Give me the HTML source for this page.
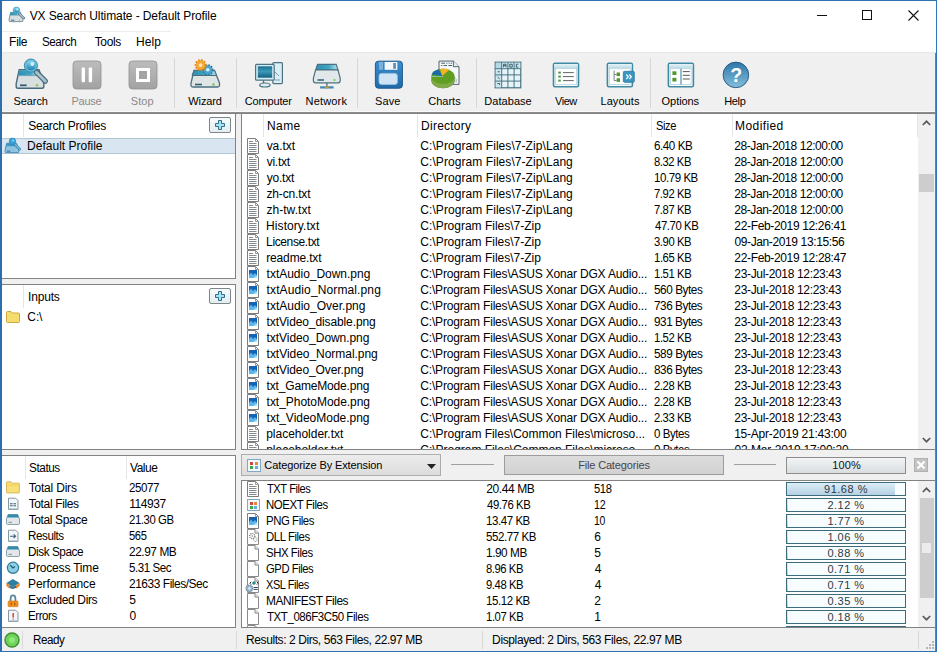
<!DOCTYPE html>
<html><head><meta charset="utf-8"><title>VX Search Ultimate</title><style>
html,body{margin:0;padding:0;width:937px;height:652px;overflow:hidden;background:#f0f0f0}
body{position:relative;font-family:"Liberation Sans",sans-serif}
.t{position:absolute;white-space:nowrap;font:12px/16px "Liberation Sans",sans-serif}
svg{overflow:visible}
</style></head><body>
<div style="position:absolute;left:0px;top:0px;width:937px;height:652px;background:#f0f0f0"></div>
<div style="position:absolute;left:1px;top:1px;width:935px;height:52px;background:#fff"></div>
<div style="position:absolute;left:1px;top:31px;width:170px;height:1px;background:#ececec"></div>
<div style="position:absolute;left:1px;top:52px;width:935px;height:1px;background:#e8e8e8"></div>
<svg style="position:absolute;left:6.35px;top:5.4px" width="20" height="20" viewBox="0 0 40 40"><path d="M9.2 14.6 H29 L33.8 28.5 V31.5 Q33.8 33.3 32 33.3 H8 Q6.2 33.3 6.2 31.5 V28.5 Z" fill="#d9dfe1" stroke="#466b7b" stroke-width="1.4"/><path d="M9.6 15.2 H27 L28.6 20.5 H7.8 Z" fill="url(#gTeal)"/><path d="M7.8 20.6 H29" stroke="#6a9aab" stroke-width="0.8"/><path d="M10 30.3 H16.6" stroke="#2f5f73" stroke-width="1.8"/><circle cx="27" cy="30.3" r="1.2" fill="#8fc04f"/><path d="M26.4 17.2 L35.4 26.2" stroke="#466b7b" stroke-width="5.2" stroke-linecap="round"/><path d="M26.4 17.2 L35.4 26.2" stroke="#aac3cd" stroke-width="2.8" stroke-linecap="round"/><circle cx="20.9" cy="10.6" r="6.6" fill="#62c2e2" stroke="#3b7f9a" stroke-width="0.9"/><circle cx="20.9" cy="10.6" r="4.9" fill="url(#gLens)"/><circle cx="22.3" cy="9" r="1.9" fill="#e6f8ff" opacity="0.85"/></svg>
<div class="t" style="left:29.67450980392157px;top:8px;color:#000;letter-spacing:-0.109px;">VX Search Ultimate - Default Profile</div>
<div style="position:absolute;left:817px;top:15px;width:10px;height:1px;background:#111"></div>
<div style="position:absolute;left:862px;top:10px;width:10px;height:10px;border:1px solid #111;box-sizing:border-box"></div>
<svg style="position:absolute;left:908px;top:10px" width="11" height="11" viewBox="0 0 11 11"><path d="M0.5 0.5 L10.5 10.5 M10.5 0.5 L0.5 10.5" stroke="#111" stroke-width="1.1"/></svg>
<div class="t" style="left:9.113725490196078px;top:34px;color:#000;letter-spacing:-0.305px;">File</div>
<div class="t" style="left:42.2px;top:34px;color:#000;letter-spacing:-0.450px;transform:scaleX(0.9671);transform-origin:0.8000000000000007px 0;">Search</div>
<div class="t" style="left:94.67450980392157px;top:34px;color:#000;letter-spacing:-0.337px;">Tools</div>
<div class="t" style="left:136.1137254901961px;top:34px;color:#000;letter-spacing:0.037px;">Help</div>
<div class="t" style="left:13.562745098039215px;top:93px;color:#000;font-size:11px;letter-spacing:-0.087px;">Search</div>
<div class="t" style="left:71.46862745098039px;top:93px;color:#8a8a8a;font-size:11px;letter-spacing:-0.226px;">Pause</div>
<div class="t" style="left:130.7627450980392px;top:93px;color:#8a8a8a;font-size:11px;letter-spacing:0.097px;">Stop</div>
<div class="t" style="left:188.27450980392157px;top:93px;color:#000;font-size:11px;letter-spacing:-0.107px;">Wizard</div>
<div class="t" style="left:244.7686274509804px;top:93px;color:#000;font-size:11px;letter-spacing:-0.159px;">Computer</div>
<div class="t" style="left:305.5686274509804px;top:93px;color:#000;font-size:11px;letter-spacing:0.165px;">Network</div>
<div class="t" style="left:375.0627450980392px;top:93px;color:#000;font-size:11px;letter-spacing:0.101px;">Save</div>
<div class="t" style="left:428.1686274509804px;top:93px;color:#000;font-size:11px;letter-spacing:0.025px;">Charts</div>
<div class="t" style="left:484.3686274509804px;top:93px;color:#000;font-size:11px;letter-spacing:0.042px;">Database</div>
<div class="t" style="left:554.5470588235294px;top:93px;color:#000;font-size:11px;letter-spacing:-0.450px;transform:scaleX(0.9952);transform-origin:0.352941176470587px 0;">View</div>
<div class="t" style="left:600.4686274509803px;top:93px;color:#000;font-size:11px;letter-spacing:0.071px;">Layouts</div>
<div class="t" style="left:661.6196078431373px;top:93px;color:#000;font-size:11px;letter-spacing:-0.067px;">Options</div>
<div class="t" style="left:724.1686274509804px;top:93px;color:#000;font-size:11px;letter-spacing:-0.305px;">Help</div>
<div style="position:absolute;left:174px;top:58px;width:1px;height:50px;background:#d6d6d6"></div>
<div style="position:absolute;left:236px;top:58px;width:1px;height:50px;background:#d6d6d6"></div>
<div style="position:absolute;left:357px;top:58px;width:1px;height:50px;background:#d6d6d6"></div>
<div style="position:absolute;left:476px;top:58px;width:1px;height:50px;background:#d6d6d6"></div>
<div style="position:absolute;left:650px;top:58px;width:1px;height:50px;background:#d6d6d6"></div>
<div style="position:absolute;left:2px;top:112px;width:234px;height:167px;background:#fff;border:1px solid #828282;box-sizing:border-box;border-left:0"></div>
<div style="position:absolute;left:2px;top:284px;width:234px;height:166px;background:#fff;border:1px solid #828282;box-sizing:border-box;border-left:0"></div>
<div style="position:absolute;left:2px;top:455px;width:234px;height:173px;background:#fff;border:1px solid #828282;box-sizing:border-box;border-left:0"></div>
<div style="position:absolute;left:241px;top:112px;width:695px;height:338px;background:#fff;border:1px solid #828282;box-sizing:border-box"></div>
<div style="position:absolute;left:241px;top:480px;width:695px;height:148px;background:#fff;border:1px solid #828282;box-sizing:border-box"></div>
<div style="position:absolute;left:23px;top:113px;width:1px;height:24px;background:#e5e5e5"></div>
<div style="position:absolute;left:23px;top:285px;width:1px;height:23px;background:#e5e5e5"></div>
<div style="position:absolute;left:25px;top:456px;width:1px;height:23px;background:#e5e5e5"></div>
<div style="position:absolute;left:126px;top:456px;width:1px;height:23px;background:#e5e5e5"></div>
<div style="position:absolute;left:263px;top:113px;width:1px;height:24px;background:#e5e5e5"></div>
<div style="position:absolute;left:417px;top:113px;width:1px;height:24px;background:#e5e5e5"></div>
<div style="position:absolute;left:651px;top:113px;width:1px;height:24px;background:#e5e5e5"></div>
<div style="position:absolute;left:732px;top:113px;width:1px;height:24px;background:#e5e5e5"></div>
<div style="position:absolute;left:917px;top:113px;width:1px;height:24px;background:#e5e5e5"></div>
<div class="t" style="left:28.2px;top:118px;color:#000;letter-spacing:-0.245px;">Search Profiles</div>
<div style="position:absolute;left:209px;top:117px;width:22px;height:16px;border:1px solid #7c878c;border-radius:2px;box-sizing:border-box;background:linear-gradient(#f6fafb,#e6eef1)"></div>
<svg style="position:absolute;left:215px;top:120px" width="10" height="10" viewBox="0 0 10 10"><path d="M3.5 0.5 h3 v3 h3 v3 h-3 v3 h-3 v-3 h-3 v-3 h3 z" fill="#a6e2f5" stroke="#2f7185" stroke-width="1"/></svg>
<div style="position:absolute;left:2px;top:138px;width:233px;height:16px;background:#d9e6f1;border-top:1px solid #b3c6d4;border-bottom:1px solid #b3c6d4;box-sizing:border-box"></div>
<svg style="position:absolute;left:2.25px;top:136.4px" width="20" height="20" viewBox="0 0 40 40"><path d="M9.2 14.6 H29 L33.8 28.5 V31.5 Q33.8 33.3 32 33.3 H8 Q6.2 33.3 6.2 31.5 V28.5 Z" fill="#8ec4e0" stroke="#2f7fae" stroke-width="1.6"/><path d="M9.6 15.2 H27 L28.6 20.5 H7.8 Z" fill="#3a98c8"/><path d="M10 30.3 H16.6" stroke="#2f6f98" stroke-width="2"/><path d="M26.4 17.2 L35.4 26.2" stroke="#2f7fae" stroke-width="5.2" stroke-linecap="round"/><path d="M26.4 17.2 L35.4 26.2" stroke="#7ab8dc" stroke-width="2.8" stroke-linecap="round"/><circle cx="20.9" cy="10.6" r="6.6" fill="#3aa2d6" stroke="#2a78a8" stroke-width="1"/><circle cx="22.3" cy="9" r="2.2" fill="#8fdcff" opacity="0.9"/></svg>
<div class="t" style="left:27.113725490196078px;top:138px;color:#000;letter-spacing:-0.001px;">Default Profile</div>
<div class="t" style="left:28.066666666666666px;top:289px;color:#000;letter-spacing:-0.189px;">Inputs</div>
<div style="position:absolute;left:209px;top:288px;width:22px;height:16px;border:1px solid #7c878c;border-radius:2px;box-sizing:border-box;background:linear-gradient(#f6fafb,#e6eef1)"></div>
<svg style="position:absolute;left:215px;top:291px" width="10" height="10" viewBox="0 0 10 10"><path d="M3.5 0.5 h3 v3 h3 v3 h-3 v3 h-3 v-3 h-3 v-3 h3 z" fill="#a6e2f5" stroke="#2f7185" stroke-width="1"/></svg>
<svg style="position:absolute;left:6px;top:311px" width="14" height="12" viewBox="0 0 14 12"><path d="M0.5 1.5 Q0.5 0.5 1.5 0.5 H5 L6.5 2 H12.5 Q13.5 2 13.5 3 V10.5 Q13.5 11.5 12.5 11.5 H1.5 Q0.5 11.5 0.5 10.5 Z" fill="#f6dc6e" stroke="#c9a83c" stroke-width="1"/></svg>
<div class="t" style="left:27.341176470588234px;top:309px;color:#000;letter-spacing:-0.112px;">C:\</div>
<div class="t" style="left:29.2px;top:460px;color:#000;letter-spacing:-0.450px;transform:scaleX(0.9823);transform-origin:0.8000000000000007px 0;">Status</div>
<div class="t" style="left:129.67450980392158px;top:460px;color:#000;letter-spacing:-0.450px;transform:scaleX(0.9975);transform-origin:0.3254901960784302px 0;">Value</div>
<svg style="position:absolute;left:6px;top:481px" width="14" height="15" viewBox="0 0 14 15"><path d="M0.5 1.5 Q0.5 0.8 1.2 0.8 H5 L6.3 2.2 H12.6 Q13.3 2.2 13.3 3 V11.2 Q13.3 11.9 12.6 11.9 H1.2 Q0.5 11.9 0.5 11.2 Z" fill="#f9e07a" stroke="#d2b04a" stroke-width="0.9"/><path d="M0.8 4.2 H13" stroke="#f3ca4a" stroke-width="0.8"/></svg>
<div class="t" style="left:28.67450980392157px;top:480px;color:#000;letter-spacing:-0.199px;">Total Dirs</div>
<div class="t" style="left:129.34901960784313px;top:480px;color:#000;letter-spacing:-0.450px;transform:scaleX(0.9641);transform-origin:0.650980392156864px 0;">25077</div>
<svg style="position:absolute;left:6px;top:497px" width="14" height="15" viewBox="0 0 14 15"><path d="M2.5 1.2 H9.6 L12 3.6 V12.5 H2.5 Z" fill="#f3f6f8" stroke="#8596a2"/><path d="M2.8 11 H11.7 V12.2 H2.8 Z" fill="#bcd3e0"/><path d="M4 6.7h2.6M7.4 6.7h2.6M4 8.7h2.6M7.4 8.7h2.6" stroke="#3f5f74" stroke-width="1.1"/></svg>
<div class="t" style="left:28.67450980392157px;top:496px;color:#000;letter-spacing:-0.365px;">Total Files</div>
<div class="t" style="left:129.14901960784314px;top:496px;color:#000;letter-spacing:-0.431px;">114937</div>
<svg style="position:absolute;left:6px;top:513px" width="14" height="15" viewBox="0 0 14 15"><path d="M2 1.5 H11.8 L13.5 6 V10.3 Q13.5 11.5 12.3 11.5 H1.7 Q0.5 11.5 0.5 10.3 V6 Z" fill="#e1e7ea" stroke="#7f959e" stroke-width="0.9"/><path d="M2.2 1.6 H11.6 L12.8 4.6 H1.2 Z" fill="#2e8cad"/><path d="M2.5 9.3h3.5" stroke="#6a8a98" stroke-width="0.9"/></svg>
<div class="t" style="left:28.67450980392157px;top:512px;color:#000;letter-spacing:-0.378px;">Total Space</div>
<div class="t" style="left:129.34901960784313px;top:512px;color:#000;letter-spacing:-0.450px;transform:scaleX(0.9473);transform-origin:0.650980392156864px 0;">21.30 GB</div>
<svg style="position:absolute;left:6px;top:529px" width="14" height="15" viewBox="0 0 14 15"><path d="M2.5 1.2 H9.6 L12 3.6 V12.5 H2.5 Z" fill="#f3f6f8" stroke="#8596a2"/><path d="M2.8 11 H11.7 V12.2 H2.8 Z" fill="#bcd3e0"/><path d="M4 7.2 H9.6 M7.6 5.3 L9.6 7.2 L7.6 9.1" stroke="#3f5f74" stroke-width="1.1" fill="none"/></svg>
<div class="t" style="left:28.113725490196078px;top:528px;color:#000;letter-spacing:-0.450px;transform:scaleX(0.9687);transform-origin:0.886274509803922px 0;">Results</div>
<div class="t" style="left:129.26666666666665px;top:528px;color:#000;letter-spacing:-0.450px;transform:scaleX(0.9331);transform-origin:0.7333333333333343px 0;">565</div>
<svg style="position:absolute;left:6px;top:545px" width="14" height="15" viewBox="0 0 14 15"><path d="M2 1.5 H11.8 L13.5 6 V10.3 Q13.5 11.5 12.3 11.5 H1.7 Q0.5 11.5 0.5 10.3 V6 Z" fill="#e1e7ea" stroke="#7f959e" stroke-width="0.9"/><path d="M2.2 1.6 H11.6 L12.8 4.6 H1.2 Z" fill="#2e8cad"/><path d="M2.5 9.3h3.5" stroke="#6a8a98" stroke-width="0.9"/></svg>
<div class="t" style="left:28.113725490196078px;top:544px;color:#000;letter-spacing:-0.450px;transform:scaleX(0.9800);transform-origin:0.886274509803922px 0;">Disk Space</div>
<div class="t" style="left:129.34901960784313px;top:544px;color:#000;letter-spacing:-0.450px;transform:scaleX(0.9904);transform-origin:0.650980392156864px 0;">22.97 MB</div>
<svg style="position:absolute;left:6px;top:561px" width="14" height="15" viewBox="0 0 14 15"><circle cx="7" cy="6.8" r="5.6" fill="#8ccfe6" stroke="#2f7b96" stroke-width="1.2"/><path d="M4.3 4.3 L7 6.9 L9 5.6" stroke="#1f5a70" stroke-width="1.2" fill="none"/></svg>
<div class="t" style="left:28.113725490196078px;top:560px;color:#000;letter-spacing:-0.178px;">Process Time</div>
<div class="t" style="left:129.26666666666665px;top:560px;color:#000;letter-spacing:-0.450px;transform:scaleX(0.9618);transform-origin:0.7333333333333343px 0;">5.31 Sec</div>
<svg style="position:absolute;left:6px;top:577px" width="14" height="15" viewBox="0 0 14 15"><path d="M0.3 6 L6.8 2 L13.7 6 L6.8 10 Z" fill="#2f7fa2"/><path d="M0.3 6 V8.8 L3.5 11.7 V8 Z" fill="#e9862c"/><path d="M13.7 6 V8.8 L10 11.7 V8.2 Z" fill="#e9862c"/><path d="M3.5 8 L6.8 10 L10 8.2 V11 L6.8 12 L3.5 11" fill="#3a6f88"/></svg>
<div class="t" style="left:28.113725490196078px;top:576px;color:#000;letter-spacing:-0.116px;">Performance</div>
<div class="t" style="left:129.34901960784313px;top:576px;color:#000;letter-spacing:-0.450px;transform:scaleX(0.9938);transform-origin:0.650980392156864px 0;">21633 Files/Sec</div>
<svg style="position:absolute;left:6px;top:593px" width="14" height="15" viewBox="0 0 14 15"><path d="M4.6 8.5 V5.5 Q4.6 2.4 7 2.4 Q9.4 2.4 9.4 5.5 V8.5" fill="none" stroke="#5a8898" stroke-width="1.8"/><rect x="2.1" y="8" width="9.9" height="5.7" rx="0.8" fill="#f2921e" stroke="#d0700a" stroke-width="0.6"/><path d="M5.2 9.5 V12.3 M8.8 9.5 V12.3" stroke="#9a4a00" stroke-width="1"/></svg>
<div class="t" style="left:28.113725490196078px;top:592px;color:#000;letter-spacing:-0.383px;">Excluded Dirs</div>
<div class="t" style="left:129.26666666666665px;top:592px;color:#000;letter-spacing:0.000px;">5</div>
<svg style="position:absolute;left:6px;top:609px" width="14" height="15" viewBox="0 0 14 15"><path d="M2.5 1.2 H9.6 L12 3.6 V12.5 H2.5 Z" fill="#f3f6f8" stroke="#8596a2"/><path d="M2.8 11 H11.7 V12.2 H2.8 Z" fill="#bcd3e0"/><path d="M7.2 4 V8.4" stroke="#e0403a" stroke-width="1.5"/><path d="M7.2 9.4 V10.6" stroke="#e0403a" stroke-width="1.5"/></svg>
<div class="t" style="left:28.113725490196078px;top:608px;color:#000;letter-spacing:-0.450px;transform:scaleX(0.9596);transform-origin:0.886274509803922px 0;">Errors</div>
<div class="t" style="left:129.46666666666667px;top:608px;color:#000;letter-spacing:0.000px;">0</div>
<div style="position:absolute;left:1px;top:628px;width:934px;height:23px;background:#f0f0f0"></div>
<svg style="position:absolute;left:4px;top:632px" width="16" height="16" viewBox="0 0 16 16"><circle cx="8" cy="8" r="7" fill="#6fd35a" stroke="#3f8f2f" stroke-width="1.4"/><circle cx="8" cy="8" r="3" fill="#8fe67a"/></svg>
<div style="position:absolute;left:22px;top:631px;width:1px;height:18px;background:#d8d8d8"></div>
<div class="t" style="left:33.113725490196074px;top:632px;color:#000;letter-spacing:-0.450px;transform:scaleX(0.9705);transform-origin:0.886274509803922px 0;">Ready</div>
<div style="position:absolute;left:236px;top:631px;width:1px;height:18px;background:#d8d8d8"></div>
<div class="t" style="left:246.1137254901961px;top:632px;color:#000;letter-spacing:-0.419px;">Results: 2 Dirs, 563 Files, 22.97 MB</div>
<div style="position:absolute;left:482px;top:631px;width:1px;height:18px;background:#d8d8d8"></div>
<div class="t" style="left:492.1137254901961px;top:632px;color:#000;letter-spacing:-0.379px;">Displayed: 2 Dirs, 563 Files, 22.97 MB</div>
<div style="position:absolute;left:918px;top:631px;width:1px;height:18px;background:#d8d8d8"></div>
<div style="position:absolute;left:932px;top:641px;width:2px;height:2px;background:#b8b8b8"></div>
<div style="position:absolute;left:929px;top:644px;width:2px;height:2px;background:#b8b8b8"></div>
<div style="position:absolute;left:932px;top:644px;width:2px;height:2px;background:#b8b8b8"></div>
<div style="position:absolute;left:926px;top:647px;width:2px;height:2px;background:#b8b8b8"></div>
<div style="position:absolute;left:929px;top:647px;width:2px;height:2px;background:#b8b8b8"></div>
<div style="position:absolute;left:932px;top:647px;width:2px;height:2px;background:#b8b8b8"></div>
<div class="t" style="left:267.1137254901961px;top:118px;color:#000;letter-spacing:0.348px;">Name</div>
<div class="t" style="left:421.1137254901961px;top:118px;color:#000;letter-spacing:0.231px;">Directory</div>
<div class="t" style="left:656.2px;top:118px;color:#000;letter-spacing:-0.450px;transform:scaleX(0.9212);transform-origin:0.8000000000000007px 0;">Size</div>
<div class="t" style="left:735.1137254901961px;top:118px;color:#000;letter-spacing:0.394px;">Modified</div>
<div style="position:absolute;left:242px;top:138px;width:676px;height:311px;overflow:hidden">
<svg style="position:absolute;left:5px;top:0px" width="12" height="16" viewBox="0 0 12 16"><path d="M0.5 0.5 H8.5 L11.5 3.5 V15.5 H0.5 Z" fill="#fff" stroke="#7d7d7d"/><path d="M8.5 0.5 V3.5 H11.5" fill="none" stroke="#9a9a9a"/><path d="M2 3.5h4M2 5.5h7.5M2 7.5h7.5M2 9.5h7.5M2 11.5h7.5M2 13.5h7.5" stroke="#858b90"/></svg>
<div class="t" style="left:24.67843137254902px;top:0px;color:#000;letter-spacing:-0.071px;">va.txt</div>
<div class="t" style="left:178.34117647058824px;top:0px;color:#000;letter-spacing:0.067px;">C:\Program Files\7-Zip\Lang</div>
<div class="t" style="left:412.33725490196076px;top:0px;color:#000;letter-spacing:-0.450px;transform:scaleX(0.9678);transform-origin:0.6627450980392169px 0;">6.40 KB</div>
<div class="t" style="left:492.34901960784316px;top:0px;color:#000;letter-spacing:-0.447px;">28-Jan-2018 12:00:00</div>
<svg style="position:absolute;left:5px;top:16px" width="12" height="16" viewBox="0 0 12 16"><path d="M0.5 0.5 H8.5 L11.5 3.5 V15.5 H0.5 Z" fill="#fff" stroke="#7d7d7d"/><path d="M8.5 0.5 V3.5 H11.5" fill="none" stroke="#9a9a9a"/><path d="M2 3.5h4M2 5.5h7.5M2 7.5h7.5M2 9.5h7.5M2 11.5h7.5M2 13.5h7.5" stroke="#858b90"/></svg>
<div class="t" style="left:24.67843137254902px;top:16px;color:#000;letter-spacing:-0.238px;">vi.txt</div>
<div class="t" style="left:178.34117647058824px;top:16px;color:#000;letter-spacing:0.067px;">C:\Program Files\7-Zip\Lang</div>
<div class="t" style="left:412.4px;top:16px;color:#000;letter-spacing:-0.450px;transform:scaleX(0.9343);transform-origin:0.6000000000000014px 0;">8.32 KB</div>
<div class="t" style="left:492.34901960784316px;top:16px;color:#000;letter-spacing:-0.447px;">28-Jan-2018 12:00:00</div>
<svg style="position:absolute;left:5px;top:32px" width="12" height="16" viewBox="0 0 12 16"><path d="M0.5 0.5 H8.5 L11.5 3.5 V15.5 H0.5 Z" fill="#fff" stroke="#7d7d7d"/><path d="M8.5 0.5 V3.5 H11.5" fill="none" stroke="#9a9a9a"/><path d="M2 3.5h4M2 5.5h7.5M2 7.5h7.5M2 9.5h7.5M2 11.5h7.5M2 13.5h7.5" stroke="#858b90"/></svg>
<div class="t" style="left:24.67843137254902px;top:32px;color:#000;letter-spacing:-0.212px;">yo.txt</div>
<div class="t" style="left:178.34117647058824px;top:32px;color:#000;letter-spacing:0.067px;">C:\Program Files\7-Zip\Lang</div>
<div class="t" style="left:412.1490196078431px;top:32px;color:#000;letter-spacing:-0.450px;transform:scaleX(0.9569);transform-origin:0.8509803921568633px 0;">10.79 KB</div>
<div class="t" style="left:492.34901960784316px;top:32px;color:#000;letter-spacing:-0.447px;">28-Jan-2018 12:00:00</div>
<svg style="position:absolute;left:5px;top:48px" width="12" height="16" viewBox="0 0 12 16"><path d="M0.5 0.5 H8.5 L11.5 3.5 V15.5 H0.5 Z" fill="#fff" stroke="#7d7d7d"/><path d="M8.5 0.5 V3.5 H11.5" fill="none" stroke="#9a9a9a"/><path d="M2 3.5h4M2 5.5h7.5M2 7.5h7.5M2 9.5h7.5M2 11.5h7.5M2 13.5h7.5" stroke="#858b90"/></svg>
<div class="t" style="left:24.470588235294116px;top:48px;color:#000;letter-spacing:-0.160px;">zh-cn.txt</div>
<div class="t" style="left:178.34117647058824px;top:48px;color:#000;letter-spacing:0.067px;">C:\Program Files\7-Zip\Lang</div>
<div class="t" style="left:412.3686274509804px;top:48px;color:#000;letter-spacing:-0.450px;transform:scaleX(0.9351);transform-origin:0.6313725490196092px 0;">7.92 KB</div>
<div class="t" style="left:492.34901960784316px;top:48px;color:#000;letter-spacing:-0.447px;">28-Jan-2018 12:00:00</div>
<svg style="position:absolute;left:5px;top:64px" width="12" height="16" viewBox="0 0 12 16"><path d="M0.5 0.5 H8.5 L11.5 3.5 V15.5 H0.5 Z" fill="#fff" stroke="#7d7d7d"/><path d="M8.5 0.5 V3.5 H11.5" fill="none" stroke="#9a9a9a"/><path d="M2 3.5h4M2 5.5h7.5M2 7.5h7.5M2 9.5h7.5M2 11.5h7.5M2 13.5h7.5" stroke="#858b90"/></svg>
<div class="t" style="left:24.470588235294116px;top:64px;color:#000;letter-spacing:0.033px;">zh-tw.txt</div>
<div class="t" style="left:178.34117647058824px;top:64px;color:#000;letter-spacing:0.067px;">C:\Program Files\7-Zip\Lang</div>
<div class="t" style="left:412.3686274509804px;top:64px;color:#000;letter-spacing:-0.450px;transform:scaleX(0.9351);transform-origin:0.6313725490196092px 0;">7.87 KB</div>
<div class="t" style="left:492.34901960784316px;top:64px;color:#000;letter-spacing:-0.447px;">28-Jan-2018 12:00:00</div>
<svg style="position:absolute;left:5px;top:80px" width="12" height="16" viewBox="0 0 12 16"><path d="M0.5 0.5 H8.5 L11.5 3.5 V15.5 H0.5 Z" fill="#fff" stroke="#7d7d7d"/><path d="M8.5 0.5 V3.5 H11.5" fill="none" stroke="#9a9a9a"/><path d="M2 3.5h4M2 5.5h7.5M2 7.5h7.5M2 9.5h7.5M2 11.5h7.5M2 13.5h7.5" stroke="#858b90"/></svg>
<div class="t" style="left:24.113725490196078px;top:80px;color:#000;letter-spacing:0.066px;">History.txt</div>
<div class="t" style="left:178.34117647058824px;top:80px;color:#000;letter-spacing:-0.009px;">C:\Program Files\7-Zip</div>
<div class="t" style="left:412.6549019607843px;top:80px;color:#000;letter-spacing:-0.450px;transform:scaleX(0.9462);transform-origin:0.34509803921568505px 0;">47.70 KB</div>
<div class="t" style="left:492.34901960784316px;top:80px;color:#000;letter-spacing:-0.348px;">22-Feb-2019 12:26:41</div>
<svg style="position:absolute;left:5px;top:96px" width="12" height="16" viewBox="0 0 12 16"><path d="M0.5 0.5 H8.5 L11.5 3.5 V15.5 H0.5 Z" fill="#fff" stroke="#7d7d7d"/><path d="M8.5 0.5 V3.5 H11.5" fill="none" stroke="#9a9a9a"/><path d="M2 3.5h4M2 5.5h7.5M2 7.5h7.5M2 9.5h7.5M2 11.5h7.5M2 13.5h7.5" stroke="#858b90"/></svg>
<div class="t" style="left:24.113725490196078px;top:96px;color:#000;letter-spacing:-0.378px;">License.txt</div>
<div class="t" style="left:178.34117647058824px;top:96px;color:#000;letter-spacing:-0.009px;">C:\Program Files\7-Zip</div>
<div class="t" style="left:412.3137254901961px;top:96px;color:#000;letter-spacing:-0.450px;transform:scaleX(0.9364);transform-origin:0.6862745098039227px 0;">3.90 KB</div>
<div class="t" style="left:492.46666666666664px;top:96px;color:#000;letter-spacing:-0.381px;">09-Jan-2019 13:15:56</div>
<svg style="position:absolute;left:5px;top:112px" width="12" height="16" viewBox="0 0 12 16"><path d="M0.5 0.5 H8.5 L11.5 3.5 V15.5 H0.5 Z" fill="#fff" stroke="#7d7d7d"/><path d="M8.5 0.5 V3.5 H11.5" fill="none" stroke="#9a9a9a"/><path d="M2 3.5h4M2 5.5h7.5M2 7.5h7.5M2 9.5h7.5M2 11.5h7.5M2 13.5h7.5" stroke="#858b90"/></svg>
<div class="t" style="left:24.227450980392156px;top:112px;color:#000;letter-spacing:-0.151px;">readme.txt</div>
<div class="t" style="left:178.34117647058824px;top:112px;color:#000;letter-spacing:-0.009px;">C:\Program Files\7-Zip</div>
<div class="t" style="left:412.1490196078431px;top:112px;color:#000;letter-spacing:-0.450px;transform:scaleX(0.9404);transform-origin:0.8509803921568633px 0;">1.65 KB</div>
<div class="t" style="left:492.34901960784316px;top:112px;color:#000;letter-spacing:-0.346px;">22-Feb-2019 12:28:47</div>
<svg style="position:absolute;left:5px;top:128px" width="12" height="16" viewBox="0 0 12 16"><path d="M0.5 0.5 H8.5 L11.5 3.5 V15.5 H0.5 Z" fill="#fff" stroke="#7d7d7d"/><path d="M8.5 0.5 V3.5 H11.5" fill="none" stroke="#9a9a9a"/><rect x="2" y="4" width="8" height="8" fill="#1463b0"/><path d="M2 9 L4 6.5 L6 9 L8 7 L10 10 V12 H2 Z" fill="#5fb4ec"/><path d="M6 12 L10 9 V12 Z" fill="#9fe0ff"/></svg>
<div class="t" style="left:24.59607843137255px;top:128px;color:#000;letter-spacing:-0.022px;">txtAudio_Down.png</div>
<div class="t" style="left:178.34117647058824px;top:128px;color:#000;letter-spacing:-0.182px;">C:\Program Files\ASUS Xonar DGX Audio...</div>
<div class="t" style="left:412.1490196078431px;top:128px;color:#000;letter-spacing:-0.450px;transform:scaleX(0.9404);transform-origin:0.8509803921568633px 0;">1.51 KB</div>
<div class="t" style="left:492.34901960784316px;top:128px;color:#000;letter-spacing:-0.336px;">23-Jul-2018 12:23:43</div>
<svg style="position:absolute;left:5px;top:144px" width="12" height="16" viewBox="0 0 12 16"><path d="M0.5 0.5 H8.5 L11.5 3.5 V15.5 H0.5 Z" fill="#fff" stroke="#7d7d7d"/><path d="M8.5 0.5 V3.5 H11.5" fill="none" stroke="#9a9a9a"/><rect x="2" y="4" width="8" height="8" fill="#1463b0"/><path d="M2 9 L4 6.5 L6 9 L8 7 L10 10 V12 H2 Z" fill="#5fb4ec"/><path d="M6 12 L10 9 V12 Z" fill="#9fe0ff"/></svg>
<div class="t" style="left:24.59607843137255px;top:144px;color:#000;letter-spacing:0.120px;">txtAudio_Normal.png</div>
<div class="t" style="left:178.34117647058824px;top:144px;color:#000;letter-spacing:-0.182px;">C:\Program Files\ASUS Xonar DGX Audio...</div>
<div class="t" style="left:412.26666666666665px;top:144px;color:#000;letter-spacing:-0.450px;transform:scaleX(0.9798);transform-origin:0.7333333333333343px 0;">560 Bytes</div>
<div class="t" style="left:492.34901960784316px;top:144px;color:#000;letter-spacing:-0.336px;">23-Jul-2018 12:23:43</div>
<svg style="position:absolute;left:5px;top:160px" width="12" height="16" viewBox="0 0 12 16"><path d="M0.5 0.5 H8.5 L11.5 3.5 V15.5 H0.5 Z" fill="#fff" stroke="#7d7d7d"/><path d="M8.5 0.5 V3.5 H11.5" fill="none" stroke="#9a9a9a"/><rect x="2" y="4" width="8" height="8" fill="#1463b0"/><path d="M2 9 L4 6.5 L6 9 L8 7 L10 10 V12 H2 Z" fill="#5fb4ec"/><path d="M6 12 L10 9 V12 Z" fill="#9fe0ff"/></svg>
<div class="t" style="left:24.59607843137255px;top:160px;color:#000;letter-spacing:0.006px;">txtAudio_Over.png</div>
<div class="t" style="left:178.34117647058824px;top:160px;color:#000;letter-spacing:-0.182px;">C:\Program Files\ASUS Xonar DGX Audio...</div>
<div class="t" style="left:412.3686274509804px;top:160px;color:#000;letter-spacing:-0.450px;transform:scaleX(0.9778);transform-origin:0.6313725490196092px 0;">736 Bytes</div>
<div class="t" style="left:492.34901960784316px;top:160px;color:#000;letter-spacing:-0.336px;">23-Jul-2018 12:23:43</div>
<svg style="position:absolute;left:5px;top:176px" width="12" height="16" viewBox="0 0 12 16"><path d="M0.5 0.5 H8.5 L11.5 3.5 V15.5 H0.5 Z" fill="#fff" stroke="#7d7d7d"/><path d="M8.5 0.5 V3.5 H11.5" fill="none" stroke="#9a9a9a"/><rect x="2" y="4" width="8" height="8" fill="#1463b0"/><path d="M2 9 L4 6.5 L6 9 L8 7 L10 10 V12 H2 Z" fill="#5fb4ec"/><path d="M6 12 L10 9 V12 Z" fill="#9fe0ff"/></svg>
<div class="t" style="left:24.59607843137255px;top:176px;color:#000;letter-spacing:-0.111px;">txtVideo_disable.png</div>
<div class="t" style="left:178.34117647058824px;top:176px;color:#000;letter-spacing:-0.182px;">C:\Program Files\ASUS Xonar DGX Audio...</div>
<div class="t" style="left:412.33725490196076px;top:176px;color:#000;letter-spacing:-0.450px;transform:scaleX(0.9784);transform-origin:0.6627450980392169px 0;">931 Bytes</div>
<div class="t" style="left:492.34901960784316px;top:176px;color:#000;letter-spacing:-0.336px;">23-Jul-2018 12:23:43</div>
<svg style="position:absolute;left:5px;top:192px" width="12" height="16" viewBox="0 0 12 16"><path d="M0.5 0.5 H8.5 L11.5 3.5 V15.5 H0.5 Z" fill="#fff" stroke="#7d7d7d"/><path d="M8.5 0.5 V3.5 H11.5" fill="none" stroke="#9a9a9a"/><rect x="2" y="4" width="8" height="8" fill="#1463b0"/><path d="M2 9 L4 6.5 L6 9 L8 7 L10 10 V12 H2 Z" fill="#5fb4ec"/><path d="M6 12 L10 9 V12 Z" fill="#9fe0ff"/></svg>
<div class="t" style="left:24.59607843137255px;top:192px;color:#000;letter-spacing:-0.066px;">txtVideo_Down.png</div>
<div class="t" style="left:178.34117647058824px;top:192px;color:#000;letter-spacing:-0.182px;">C:\Program Files\ASUS Xonar DGX Audio...</div>
<div class="t" style="left:412.1490196078431px;top:192px;color:#000;letter-spacing:-0.450px;transform:scaleX(0.9404);transform-origin:0.8509803921568633px 0;">1.52 KB</div>
<div class="t" style="left:492.34901960784316px;top:192px;color:#000;letter-spacing:-0.336px;">23-Jul-2018 12:23:43</div>
<svg style="position:absolute;left:5px;top:208px" width="12" height="16" viewBox="0 0 12 16"><path d="M0.5 0.5 H8.5 L11.5 3.5 V15.5 H0.5 Z" fill="#fff" stroke="#7d7d7d"/><path d="M8.5 0.5 V3.5 H11.5" fill="none" stroke="#9a9a9a"/><rect x="2" y="4" width="8" height="8" fill="#1463b0"/><path d="M2 9 L4 6.5 L6 9 L8 7 L10 10 V12 H2 Z" fill="#5fb4ec"/><path d="M6 12 L10 9 V12 Z" fill="#9fe0ff"/></svg>
<div class="t" style="left:24.59607843137255px;top:208px;color:#000;letter-spacing:-0.038px;">txtVideo_Normal.png</div>
<div class="t" style="left:178.34117647058824px;top:208px;color:#000;letter-spacing:-0.182px;">C:\Program Files\ASUS Xonar DGX Audio...</div>
<div class="t" style="left:412.26666666666665px;top:208px;color:#000;letter-spacing:-0.450px;transform:scaleX(0.9798);transform-origin:0.7333333333333343px 0;">589 Bytes</div>
<div class="t" style="left:492.34901960784316px;top:208px;color:#000;letter-spacing:-0.336px;">23-Jul-2018 12:23:43</div>
<svg style="position:absolute;left:5px;top:224px" width="12" height="16" viewBox="0 0 12 16"><path d="M0.5 0.5 H8.5 L11.5 3.5 V15.5 H0.5 Z" fill="#fff" stroke="#7d7d7d"/><path d="M8.5 0.5 V3.5 H11.5" fill="none" stroke="#9a9a9a"/><rect x="2" y="4" width="8" height="8" fill="#1463b0"/><path d="M2 9 L4 6.5 L6 9 L8 7 L10 10 V12 H2 Z" fill="#5fb4ec"/><path d="M6 12 L10 9 V12 Z" fill="#9fe0ff"/></svg>
<div class="t" style="left:24.59607843137255px;top:224px;color:#000;letter-spacing:-0.092px;">txtVideo_Over.png</div>
<div class="t" style="left:178.34117647058824px;top:224px;color:#000;letter-spacing:-0.182px;">C:\Program Files\ASUS Xonar DGX Audio...</div>
<div class="t" style="left:412.4px;top:224px;color:#000;letter-spacing:-0.450px;transform:scaleX(0.9772);transform-origin:0.6000000000000014px 0;">836 Bytes</div>
<div class="t" style="left:492.34901960784316px;top:224px;color:#000;letter-spacing:-0.336px;">23-Jul-2018 12:23:43</div>
<svg style="position:absolute;left:5px;top:240px" width="12" height="16" viewBox="0 0 12 16"><path d="M0.5 0.5 H8.5 L11.5 3.5 V15.5 H0.5 Z" fill="#fff" stroke="#7d7d7d"/><path d="M8.5 0.5 V3.5 H11.5" fill="none" stroke="#9a9a9a"/><rect x="2" y="4" width="8" height="8" fill="#1463b0"/><path d="M2 9 L4 6.5 L6 9 L8 7 L10 10 V12 H2 Z" fill="#5fb4ec"/><path d="M6 12 L10 9 V12 Z" fill="#9fe0ff"/></svg>
<div class="t" style="left:24.59607843137255px;top:240px;color:#000;letter-spacing:-0.172px;">txt_GameMode.png</div>
<div class="t" style="left:178.34117647058824px;top:240px;color:#000;letter-spacing:-0.182px;">C:\Program Files\ASUS Xonar DGX Audio...</div>
<div class="t" style="left:412.34901960784316px;top:240px;color:#000;letter-spacing:-0.450px;transform:scaleX(0.9356);transform-origin:0.650980392156864px 0;">2.28 KB</div>
<div class="t" style="left:492.34901960784316px;top:240px;color:#000;letter-spacing:-0.336px;">23-Jul-2018 12:23:43</div>
<svg style="position:absolute;left:5px;top:256px" width="12" height="16" viewBox="0 0 12 16"><path d="M0.5 0.5 H8.5 L11.5 3.5 V15.5 H0.5 Z" fill="#fff" stroke="#7d7d7d"/><path d="M8.5 0.5 V3.5 H11.5" fill="none" stroke="#9a9a9a"/><rect x="2" y="4" width="8" height="8" fill="#1463b0"/><path d="M2 9 L4 6.5 L6 9 L8 7 L10 10 V12 H2 Z" fill="#5fb4ec"/><path d="M6 12 L10 9 V12 Z" fill="#9fe0ff"/></svg>
<div class="t" style="left:24.59607843137255px;top:256px;color:#000;letter-spacing:-0.039px;">txt_PhotoMode.png</div>
<div class="t" style="left:178.34117647058824px;top:256px;color:#000;letter-spacing:-0.182px;">C:\Program Files\ASUS Xonar DGX Audio...</div>
<div class="t" style="left:412.34901960784316px;top:256px;color:#000;letter-spacing:-0.450px;transform:scaleX(0.9356);transform-origin:0.650980392156864px 0;">2.28 KB</div>
<div class="t" style="left:492.34901960784316px;top:256px;color:#000;letter-spacing:-0.336px;">23-Jul-2018 12:23:43</div>
<svg style="position:absolute;left:5px;top:272px" width="12" height="16" viewBox="0 0 12 16"><path d="M0.5 0.5 H8.5 L11.5 3.5 V15.5 H0.5 Z" fill="#fff" stroke="#7d7d7d"/><path d="M8.5 0.5 V3.5 H11.5" fill="none" stroke="#9a9a9a"/><rect x="2" y="4" width="8" height="8" fill="#1463b0"/><path d="M2 9 L4 6.5 L6 9 L8 7 L10 10 V12 H2 Z" fill="#5fb4ec"/><path d="M6 12 L10 9 V12 Z" fill="#9fe0ff"/></svg>
<div class="t" style="left:24.59607843137255px;top:272px;color:#000;letter-spacing:-0.017px;">txt_VideoMode.png</div>
<div class="t" style="left:178.34117647058824px;top:272px;color:#000;letter-spacing:-0.182px;">C:\Program Files\ASUS Xonar DGX Audio...</div>
<div class="t" style="left:412.34901960784316px;top:272px;color:#000;letter-spacing:-0.450px;transform:scaleX(0.9356);transform-origin:0.650980392156864px 0;">2.33 KB</div>
<div class="t" style="left:492.34901960784316px;top:272px;color:#000;letter-spacing:-0.336px;">23-Jul-2018 12:23:43</div>
<svg style="position:absolute;left:5px;top:288px" width="12" height="16" viewBox="0 0 12 16"><path d="M0.5 0.5 H8.5 L11.5 3.5 V15.5 H0.5 Z" fill="#fff" stroke="#7d7d7d"/><path d="M8.5 0.5 V3.5 H11.5" fill="none" stroke="#9a9a9a"/><path d="M2 3.5h4M2 5.5h7.5M2 7.5h7.5M2 9.5h7.5M2 11.5h7.5M2 13.5h7.5" stroke="#858b90"/></svg>
<div class="t" style="left:24.231372549019607px;top:288px;color:#000;letter-spacing:-0.024px;">placeholder.txt</div>
<div class="t" style="left:178.34117647058824px;top:288px;color:#000;letter-spacing:-0.030px;">C:\Program Files\Common Files\microso...</div>
<div class="t" style="left:412.46666666666664px;top:288px;color:#000;letter-spacing:-0.450px;transform:scaleX(0.9562);transform-origin:0.533333333333335px 0;">0 Bytes</div>
<div class="t" style="left:492.1490196078431px;top:288px;color:#000;letter-spacing:-0.224px;">15-Apr-2019 21:43:00</div>
<svg style="position:absolute;left:5px;top:304px" width="12" height="16" viewBox="0 0 12 16"><path d="M0.5 0.5 H8.5 L11.5 3.5 V15.5 H0.5 Z" fill="#fff" stroke="#7d7d7d"/><path d="M8.5 0.5 V3.5 H11.5" fill="none" stroke="#9a9a9a"/><path d="M2 3.5h4M2 5.5h7.5M2 7.5h7.5M2 9.5h7.5M2 11.5h7.5M2 13.5h7.5" stroke="#858b90"/></svg>
<div class="t" style="left:24.231372549019607px;top:304px;color:#000;letter-spacing:-0.024px;">placeholder.txt</div>
<div class="t" style="left:178.34117647058824px;top:304px;color:#000;letter-spacing:-0.030px;">C:\Program Files\Common Files\microso...</div>
<div class="t" style="left:412.46666666666664px;top:304px;color:#000;letter-spacing:-0.450px;transform:scaleX(0.9562);transform-origin:0.533333333333335px 0;">0 Bytes</div>
<div class="t" style="left:492.46666666666664px;top:304px;color:#000;letter-spacing:-0.244px;">02-Mar-2019 17:00:20</div>
</div>
<div style="position:absolute;left:918px;top:113px;width:17px;height:336px;background:#f0f0f0"></div>
<svg style="position:absolute;left:922px;top:120px" width="9" height="6" viewBox="0 0 9 6"><path d="M0.8 5 L4.5 1.3 L8.2 5" fill="none" stroke="#5a5a5a" stroke-width="1.7"/></svg>
<svg style="position:absolute;left:922px;top:437px" width="9" height="6" viewBox="0 0 9 6"><path d="M0.8 1 L4.5 4.7 L8.2 1" fill="none" stroke="#5a5a5a" stroke-width="1.7"/></svg>
<div style="position:absolute;left:919px;top:174px;width:15px;height:18px;background:#cdcdcd"></div>
<div style="position:absolute;left:241px;top:454px;width:200px;height:22px;border:1px solid #adadad;box-sizing:border-box;background:linear-gradient(#ececec,#dcdcdc)"></div>
<svg style="position:absolute;left:247px;top:459px" width="14" height="13" viewBox="0 0 14 13"><rect x="0.5" y="0.5" width="13" height="12" fill="#f4f8fb" stroke="#7fa9c9"/><rect x="3" y="3" width="3" height="3" fill="#d04a3a"/><rect x="8" y="3" width="3" height="3" fill="#e0884a"/><rect x="3" y="7" width="3" height="3" fill="#3aa84a"/><rect x="8" y="7" width="3" height="3" fill="#6aa8e0"/></svg>
<div class="t" style="left:264.3686274509804px;top:457px;color:#000;font-size:11px;letter-spacing:-0.110px;">Categorize By Extension</div>
<svg style="position:absolute;left:427px;top:464px" width="9" height="5" viewBox="0 0 9 5"><path d="M0 0 H9 L4.5 5 Z" fill="#222"/></svg>
<div style="position:absolute;left:451px;top:464px;width:43px;height:1px;background:#a0a0a0"></div>
<div style="position:absolute;left:504px;top:455px;width:220px;height:20px;border:1px solid #9c9c9c;box-sizing:border-box;background:linear-gradient(#dcdcdc,#d2d2d2)"></div>
<div class="t" style="left:578.1686274509804px;top:457px;color:#454550;font-size:11px;letter-spacing:-0.161px;">File Categories</div>
<div style="position:absolute;left:734px;top:464px;width:42px;height:1px;background:#a0a0a0"></div>
<div style="position:absolute;left:786px;top:457px;width:120px;height:17px;border:1px solid #8c8c8c;box-sizing:border-box;background:linear-gradient(#f2f4f5,#d9dde0)"></div>
<div class="t" style="left:832.1450980392157px;top:457px;color:#111;font-size:11px;letter-spacing:0.163px;">100%</div>
<div style="position:absolute;left:914px;top:458px;width:14px;height:14px;background:#c4c4c4;border:1px solid #b0b0b0;box-sizing:border-box"></div>
<svg style="position:absolute;left:914px;top:458px" width="14" height="14" viewBox="0 0 14 14"><path d="M3.5 3.5 L10.5 10.5 M10.5 3.5 L3.5 10.5" stroke="#fff" stroke-width="2.2"/></svg>
<div style="position:absolute;left:242px;top:481px;width:676px;height:146px;overflow:hidden">
<svg style="position:absolute;left:5px;top:0px" width="13" height="16" viewBox="0 0 13 16"><path d="M0.5 0.5 H8.5 L11.5 3.5 V15.5 H0.5 Z" fill="#fff" stroke="#7d7d7d"/><path d="M8.5 0.5 V3.5 H11.5" fill="none" stroke="#9a9a9a"/><path d="M2 3.5h4M2 5.5h7.5M2 7.5h7.5M2 9.5h7.5M2 11.5h7.5M2 13.5h7.5" stroke="#858b90"/></svg>
<div class="t" style="left:24.67450980392157px;top:0px;color:#000;letter-spacing:-0.450px;transform:scaleX(0.9222);transform-origin:0.3254901960784302px 0;">TXT Files</div>
<div class="t" style="left:244.34901960784313px;top:0px;color:#000;letter-spacing:-0.410px;">20.44 MB</div>
<div class="t" style="left:352.26666666666665px;top:0px;color:#000;letter-spacing:-0.450px;transform:scaleX(0.9331);transform-origin:0.7333333333333343px 0;">518</div>
<div style="position:absolute;left:544px;top:1px;width:120px;height:14px;border:1px solid #3d6b7e;box-sizing:border-box;background:#f7fdff"><div style="position:absolute;left:0;top:0;width:108px;height:12px;background:linear-gradient(#dcedf7,#b6d1e3)"></div><div class="t" style="left:0;width:118px;top:0px;font-size:11px;line-height:12px;text-align:center;color:#2f3a44;letter-spacing:0.5px">91.68 %</div></div>
<svg style="position:absolute;left:5px;top:16px" width="13" height="16" viewBox="0 0 13 16"><rect x="0.5" y="2.5" width="12" height="11" fill="#f4f8fb" stroke="#7fa9c9"/><rect x="3" y="5" width="3" height="3" fill="#d04a3a"/><rect x="7" y="5" width="3" height="3" fill="#e0884a"/><rect x="3" y="9" width="3" height="3" fill="#3aa84a"/><rect x="7" y="9" width="3" height="3" fill="#6aa8e0"/></svg>
<div class="t" style="left:24.113725490196078px;top:16px;color:#000;letter-spacing:-0.450px;transform:scaleX(0.9509);transform-origin:0.886274509803922px 0;">NOEXT Files</div>
<div class="t" style="left:244.65490196078431px;top:16px;color:#000;letter-spacing:-0.450px;transform:scaleX(0.9462);transform-origin:0.34509803921568505px 0;">49.76 KB</div>
<div class="t" style="left:352.1490196078431px;top:16px;color:#000;letter-spacing:-0.450px;transform:scaleX(0.8910);transform-origin:0.8509803921568633px 0;">12</div>
<div style="position:absolute;left:544px;top:17px;width:120px;height:14px;border:1px solid #3d6b7e;box-sizing:border-box;background:#f7fdff"><div style="position:absolute;left:0;top:0;width:1px;height:12px;background:linear-gradient(#dcedf7,#b6d1e3)"></div><div class="t" style="left:0;width:118px;top:0px;font-size:11px;line-height:12px;text-align:center;color:#2f3a44;letter-spacing:0.5px">2.12 %</div></div>
<svg style="position:absolute;left:5px;top:32px" width="13" height="16" viewBox="0 0 13 16"><path d="M0.5 0.5 H8.5 L11.5 3.5 V15.5 H0.5 Z" fill="#fff" stroke="#7d7d7d"/><path d="M8.5 0.5 V3.5 H11.5" fill="none" stroke="#9a9a9a"/><rect x="2" y="4" width="8" height="8" fill="#1463b0"/><path d="M2 9 L4 6.5 L6 9 L8 7 L10 10 V12 H2 Z" fill="#5fb4ec"/><path d="M6 12 L10 9 V12 Z" fill="#9fe0ff"/></svg>
<div class="t" style="left:24.113725490196078px;top:32px;color:#000;letter-spacing:-0.450px;transform:scaleX(0.9468);transform-origin:0.886274509803922px 0;">PNG Files</div>
<div class="t" style="left:244.14901960784314px;top:32px;color:#000;letter-spacing:-0.450px;transform:scaleX(0.9569);transform-origin:0.8509803921568633px 0;">13.47 KB</div>
<div class="t" style="left:352.1490196078431px;top:32px;color:#000;letter-spacing:-0.450px;transform:scaleX(0.8682);transform-origin:0.8509803921568633px 0;">10</div>
<div style="position:absolute;left:544px;top:33px;width:120px;height:14px;border:1px solid #3d6b7e;box-sizing:border-box;background:#f7fdff"><div style="position:absolute;left:0;top:0;width:1px;height:12px;background:linear-gradient(#dcedf7,#b6d1e3)"></div><div class="t" style="left:0;width:118px;top:0px;font-size:11px;line-height:12px;text-align:center;color:#2f3a44;letter-spacing:0.5px">1.77 %</div></div>
<svg style="position:absolute;left:5px;top:48px" width="13" height="16" viewBox="0 0 13 16"><path d="M0.5 0.5 H8 L11.5 4 V15.5 H0.5 Z" fill="#fff" stroke="#8a8a8a"/><path d="M8 0.5 V4 H11.5" fill="#eee" stroke="#8a8a8a"/><circle cx="5.3" cy="7.1" r="2.6" fill="none" stroke="#6a6a6a" stroke-width="1.2" stroke-dasharray="1.1 0.9"/><circle cx="5.3" cy="7.1" r="0.8" fill="#888"/><circle cx="8.4" cy="10.6" r="1.9" fill="#fff" stroke="#7a8a9a" stroke-width="1" stroke-dasharray="1 0.8"/></svg>
<div class="t" style="left:24.113725490196078px;top:48px;color:#000;letter-spacing:-0.450px;transform:scaleX(0.9451);transform-origin:0.886274509803922px 0;">DLL Files</div>
<div class="t" style="left:244.26666666666665px;top:48px;color:#000;letter-spacing:-0.450px;transform:scaleX(0.9601);transform-origin:0.7333333333333343px 0;">552.77 KB</div>
<div class="t" style="left:352.33725490196076px;top:48px;color:#000;letter-spacing:0.000px;">6</div>
<div style="position:absolute;left:544px;top:49px;width:120px;height:14px;border:1px solid #3d6b7e;box-sizing:border-box;background:#f7fdff"><div style="position:absolute;left:0;top:0;width:1px;height:12px;background:linear-gradient(#dcedf7,#b6d1e3)"></div><div class="t" style="left:0;width:118px;top:0px;font-size:11px;line-height:12px;text-align:center;color:#2f3a44;letter-spacing:0.5px">1.06 %</div></div>
<svg style="position:absolute;left:5px;top:64px" width="13" height="16" viewBox="0 0 13 16"><path d="M0.5 0.5 H8 L11.5 4 V15.5 H0.5 Z" fill="#fff" stroke="#8a8a8a"/><path d="M8 0.5 V4 H11.5" fill="#eee" stroke="#8a8a8a"/></svg>
<div class="t" style="left:24.2px;top:64px;color:#000;letter-spacing:-0.450px;transform:scaleX(0.9456);transform-origin:0.8000000000000007px 0;">SHX Files</div>
<div class="t" style="left:244.14901960784314px;top:64px;color:#000;letter-spacing:-0.450px;transform:scaleX(0.9845);transform-origin:0.8509803921568633px 0;">1.90 MB</div>
<div class="t" style="left:352.26666666666665px;top:64px;color:#000;letter-spacing:0.000px;">5</div>
<div style="position:absolute;left:544px;top:65px;width:120px;height:14px;border:1px solid #3d6b7e;box-sizing:border-box;background:#f7fdff"><div style="position:absolute;left:0;top:0;width:1px;height:12px;background:linear-gradient(#dcedf7,#b6d1e3)"></div><div class="t" style="left:0;width:118px;top:0px;font-size:11px;line-height:12px;text-align:center;color:#2f3a44;letter-spacing:0.5px">0.88 %</div></div>
<svg style="position:absolute;left:5px;top:80px" width="13" height="16" viewBox="0 0 13 16"><path d="M0.5 0.5 H8 L11.5 4 V15.5 H0.5 Z" fill="#fff" stroke="#8a8a8a"/><path d="M8 0.5 V4 H11.5" fill="#eee" stroke="#8a8a8a"/></svg>
<div class="t" style="left:24.337254901960783px;top:80px;color:#000;letter-spacing:-0.450px;transform:scaleX(0.9334);transform-origin:0.6627450980392169px 0;">GPD Files</div>
<div class="t" style="left:244.4px;top:80px;color:#000;letter-spacing:-0.450px;transform:scaleX(0.9343);transform-origin:0.6000000000000014px 0;">8.96 KB</div>
<div class="t" style="left:352.6549019607843px;top:80px;color:#000;letter-spacing:0.000px;">4</div>
<div style="position:absolute;left:544px;top:81px;width:120px;height:14px;border:1px solid #3d6b7e;box-sizing:border-box;background:#f7fdff"><div style="position:absolute;left:0;top:0;width:1px;height:12px;background:linear-gradient(#dcedf7,#b6d1e3)"></div><div class="t" style="left:0;width:118px;top:0px;font-size:11px;line-height:12px;text-align:center;color:#2f3a44;letter-spacing:0.5px">0.71 %</div></div>
<svg style="position:absolute;left:5px;top:96px" width="13" height="16" viewBox="0 0 13 16"><path d="M0.5 0.5 H8 L11.5 4 V15.5 H0.5 Z" fill="#fff" stroke="#8a8a8a"/><path d="M8 0.5 V4 H11.5" fill="#eee" stroke="#8a8a8a"/><path d="M4.2 4.8 L2.8 6.2 L4.2 7.6 M9.8 4.8 L11.2 6.2 L9.8 7.6" fill="none" stroke="#333" stroke-width="1"/><circle cx="7" cy="6" r="1.8" fill="#2a8a8a"/><path d="M6.6 10.5 H10.8 M6.6 12.4 H10.8" stroke="#3a4a60" stroke-width="1"/><circle cx="2.4" cy="11.4" r="3.4" fill="#9ab4c8" stroke="#6a88a0" stroke-width="1.2" stroke-dasharray="1.2 0.8"/><circle cx="2.4" cy="11.4" r="1.1" fill="#fff"/></svg>
<div class="t" style="left:24.376470588235293px;top:96px;color:#000;letter-spacing:-0.450px;transform:scaleX(0.9134);transform-origin:0.6235294117647072px 0;">XSL Files</div>
<div class="t" style="left:244.3372549019608px;top:96px;color:#000;letter-spacing:-0.450px;transform:scaleX(0.9359);transform-origin:0.6627450980392169px 0;">9.48 KB</div>
<div class="t" style="left:352.6549019607843px;top:96px;color:#000;letter-spacing:0.000px;">4</div>
<div style="position:absolute;left:544px;top:97px;width:120px;height:14px;border:1px solid #3d6b7e;box-sizing:border-box;background:#f7fdff"><div style="position:absolute;left:0;top:0;width:1px;height:12px;background:linear-gradient(#dcedf7,#b6d1e3)"></div><div class="t" style="left:0;width:118px;top:0px;font-size:11px;line-height:12px;text-align:center;color:#2f3a44;letter-spacing:0.5px">0.71 %</div></div>
<svg style="position:absolute;left:5px;top:112px" width="13" height="16" viewBox="0 0 13 16"><path d="M0.5 0.5 H8 L11.5 4 V15.5 H0.5 Z" fill="#fff" stroke="#8a8a8a"/><path d="M8 0.5 V4 H11.5" fill="#eee" stroke="#8a8a8a"/></svg>
<div class="t" style="left:24.113725490196078px;top:112px;color:#000;letter-spacing:-0.450px;transform:scaleX(0.9910);transform-origin:0.886274509803922px 0;">MANIFEST Files</div>
<div class="t" style="left:244.14901960784314px;top:112px;color:#000;letter-spacing:-0.450px;transform:scaleX(0.9569);transform-origin:0.8509803921568633px 0;">15.12 KB</div>
<div class="t" style="left:352.34901960784316px;top:112px;color:#000;letter-spacing:0.000px;">2</div>
<div style="position:absolute;left:544px;top:113px;width:120px;height:14px;border:1px solid #3d6b7e;box-sizing:border-box;background:#f7fdff"><div style="position:absolute;left:0;top:0;width:1px;height:12px;background:linear-gradient(#dcedf7,#b6d1e3)"></div><div class="t" style="left:0;width:118px;top:0px;font-size:11px;line-height:12px;text-align:center;color:#2f3a44;letter-spacing:0.5px">0.35 %</div></div>
<svg style="position:absolute;left:5px;top:128px" width="13" height="16" viewBox="0 0 13 16"><path d="M0.5 0.5 H8 L11.5 4 V15.5 H0.5 Z" fill="#fff" stroke="#8a8a8a"/><path d="M8 0.5 V4 H11.5" fill="#eee" stroke="#8a8a8a"/></svg>
<div class="t" style="left:24.67450980392157px;top:128px;color:#000;letter-spacing:-0.450px;transform:scaleX(0.9574);transform-origin:0.3254901960784302px 0;">TXT_086F3C50 Files</div>
<div class="t" style="left:244.14901960784314px;top:128px;color:#000;letter-spacing:-0.450px;transform:scaleX(0.9404);transform-origin:0.8509803921568633px 0;">1.07 KB</div>
<div class="t" style="left:352.1490196078431px;top:128px;color:#000;letter-spacing:0.000px;">1</div>
<div style="position:absolute;left:544px;top:129px;width:120px;height:14px;border:1px solid #3d6b7e;box-sizing:border-box;background:#f7fdff"><div style="position:absolute;left:0;top:0;width:1px;height:12px;background:linear-gradient(#dcedf7,#b6d1e3)"></div><div class="t" style="left:0;width:118px;top:0px;font-size:11px;line-height:12px;text-align:center;color:#2f3a44;letter-spacing:0.5px">0.18 %</div></div>
<svg style="position:absolute;left:5px;top:144px" width="13" height="16" viewBox="0 0 13 16"><path d="M0.5 0.5 H8 L11.5 4 V15.5 H0.5 Z" fill="#fff" stroke="#8a8a8a"/><path d="M8 0.5 V4 H11.5" fill="#eee" stroke="#8a8a8a"/></svg>
<div style="position:absolute;left:544px;top:145px;width:120px;height:14px;border:1px solid #3d6b7e;box-sizing:border-box;background:#f7fdff"><div style="position:absolute;left:0;top:0;width:1px;height:12px;background:linear-gradient(#dcedf7,#b6d1e3)"></div><div class="t" style="left:0;width:118px;top:0px;font-size:11px;line-height:12px;text-align:center;color:#2f3a44;letter-spacing:0.5px"></div></div>
</div>
<div style="position:absolute;left:918px;top:481px;width:17px;height:146px;background:#f0f0f0"></div>
<svg style="position:absolute;left:922px;top:487px" width="9" height="6" viewBox="0 0 9 6"><path d="M0.8 5 L4.5 1.3 L8.2 5" fill="none" stroke="#5a5a5a" stroke-width="1.7"/></svg>
<svg style="position:absolute;left:922px;top:615px" width="9" height="6" viewBox="0 0 9 6"><path d="M0.8 1 L4.5 4.7 L8.2 1" fill="none" stroke="#5a5a5a" stroke-width="1.7"/></svg>
<div style="position:absolute;left:920px;top:498px;width:14px;height:100px;background:#cdcdcd"></div>
<div style="position:absolute;left:922px;top:543px;width:9px;height:10px;background:#ececec"></div>
<svg style="position:absolute;left:0;top:0" width="0" height="0"><defs>
<linearGradient id="gLens" x1="0" y1="0" x2="0" y2="1"><stop offset="0" stop-color="#8fd6f2"/><stop offset="1" stop-color="#1f7fb0"/></linearGradient>
<linearGradient id="gGray" x1="0" y1="0" x2="0" y2="1"><stop offset="0" stop-color="#bdbdbd"/><stop offset="1" stop-color="#a2a2a2"/></linearGradient>
<linearGradient id="gTeal" x1="0" y1="0" x2="1" y2="0"><stop offset="0" stop-color="#2f8fb0"/><stop offset="0.6" stop-color="#3fa6c6"/><stop offset="1" stop-color="#bfe3ef"/></linearGradient>
<linearGradient id="gScreen" x1="0" y1="0" x2="0" y2="1"><stop offset="0" stop-color="#1d6f8f"/><stop offset="0.45" stop-color="#3a9ab8"/><stop offset="1" stop-color="#14607e"/></linearGradient>
<linearGradient id="gHelp" x1="0" y1="0" x2="0" y2="1"><stop offset="0" stop-color="#2b76a8"/><stop offset="1" stop-color="#86bedc"/></linearGradient>
<linearGradient id="gSave" x1="0" y1="0" x2="0" y2="1"><stop offset="0" stop-color="#3a8ed0"/><stop offset="1" stop-color="#1f6aa8"/></linearGradient>
<linearGradient id="gBand" x1="0" y1="0" x2="0" y2="1"><stop offset="0" stop-color="#e6f3f7"/><stop offset="1" stop-color="#b9d9e3"/></linearGradient>
</defs></svg>
<svg style="position:absolute;left:10px;top:55px" width="40" height="40" viewBox="0 0 40 40"><path d="M9.2 14.6 H29 L33.8 28.5 V31.5 Q33.8 33.3 32 33.3 H8 Q6.2 33.3 6.2 31.5 V28.5 Z" fill="#d9dfe1" stroke="#466b7b" stroke-width="1.4"/><path d="M9.6 15.2 H27 L28.6 20.5 H7.8 Z" fill="url(#gTeal)"/><path d="M7.8 20.6 H29" stroke="#6a9aab" stroke-width="0.8"/><path d="M10 30.3 H16.6" stroke="#2f5f73" stroke-width="1.8"/><circle cx="27" cy="30.3" r="1.2" fill="#8fc04f"/><path d="M26.4 17.2 L35.4 26.2" stroke="#466b7b" stroke-width="5.2" stroke-linecap="round"/><path d="M26.4 17.2 L35.4 26.2" stroke="#aac3cd" stroke-width="2.8" stroke-linecap="round"/><circle cx="20.9" cy="10.6" r="6.6" fill="#62c2e2" stroke="#3b7f9a" stroke-width="0.9"/><circle cx="20.9" cy="10.6" r="4.9" fill="url(#gLens)"/><circle cx="22.3" cy="9" r="1.9" fill="#e6f8ff" opacity="0.85"/></svg>
<svg style="position:absolute;left:66px;top:55px" width="40" height="40" viewBox="0 0 40 40"><rect x="7" y="6" width="28" height="28" rx="3.5" fill="url(#gGray)" stroke="#8f8f8f" stroke-width="0.8"/><rect x="15.6" y="12.6" width="3.4" height="14.7" rx="1" fill="#fff"/><rect x="22.7" y="12.6" width="3.4" height="14.7" rx="1" fill="#fff"/></svg>
<svg style="position:absolute;left:122px;top:55px" width="40" height="40" viewBox="0 0 40 40"><rect x="7" y="6" width="28" height="28" rx="3.5" fill="url(#gGray)" stroke="#8f8f8f" stroke-width="0.8"/><rect x="14" y="13" width="14" height="14" fill="#fff"/><rect x="17" y="16" width="8" height="8" fill="#a4a4a4"/></svg>
<svg style="position:absolute;left:185px;top:55px" width="40" height="40" viewBox="0 0 40 40"><path d="M9 15.5 H29.5 L34.5 28 V30.5 Q34.5 32 32.5 32 H8 Q6 32 6 30.5 V28 Z" fill="#dfe4e5" stroke="#4a6f7f" stroke-width="1.3"/><path d="M9 15.5 H29.5 L31.5 20.5 H7 Z" fill="url(#gTeal)" stroke="#4a6f7f" stroke-width="1"/><path d="M10 29.5 H17" stroke="#2f5f73" stroke-width="1.6"/><circle cx="28.5" cy="29.5" r="1.2" fill="#7fbf4f"/><circle cx="22.8" cy="14.8" r="4.6" fill="#5ab4dc" stroke="#2b7aa0" stroke-width="2.2" stroke-dasharray="1.6 1.1"/><circle cx="22.8" cy="14.8" r="4" fill="#4aa6d0"/><circle cx="22.8" cy="14.8" r="1.8" fill="#d8f0fa"/><circle cx="15.6" cy="10.1" r="4.8" fill="#f6b040" stroke="#e88a14" stroke-width="2.4" stroke-dasharray="1.7 1.1"/><circle cx="15.6" cy="10.1" r="4.1" fill="#f4a838"/><circle cx="15.6" cy="10.1" r="1.9" fill="#fde6b0"/></svg>
<svg style="position:absolute;left:248px;top:55px" width="40" height="40" viewBox="0 0 40 40"><rect x="24.8" y="7.6" width="9.6" height="21" rx="1" fill="#dcedf3" stroke="#4a7483" stroke-width="1.2"/><path d="M27 17 L31 21" stroke="#7a9aa8" stroke-width="1"/><rect x="27" y="24" width="5" height="2" fill="#a8c8d4"/><rect x="7.6" y="9.4" width="18.6" height="15.8" rx="1" fill="#d6edf5" stroke="#4a7483" stroke-width="1.2"/><rect x="9.8" y="11.3" width="14.4" height="11.4" fill="url(#gScreen)"/><path d="M15.5 25.2 V28" stroke="#4a7483" stroke-width="1.4"/><ellipse cx="16.9" cy="30" rx="5.2" ry="2" fill="#dcedf3" stroke="#4a7483" stroke-width="1.2"/></svg>
<svg style="position:absolute;left:306px;top:55px" width="40" height="40" viewBox="0 0 40 40"><path d="M11.5 9.4 H30.2 L32 15 H9.6 Z" fill="url(#gTeal)" stroke="#4a6f7f" stroke-width="1.1"/><path d="M9.6 15 H32 L34.2 23 V25.5 Q34.2 27.8 32 27.8 H9.6 Q7.4 27.8 7.4 25.5 V23 Z" fill="#e2e8ea" stroke="#4a6f7f" stroke-width="1.2"/><path d="M11.5 25 H18" stroke="#2f5f73" stroke-width="1.5"/><circle cx="28.5" cy="25" r="1.1" fill="#7fbf4f"/><path d="M20.9 27.8 V31.5" stroke="#4a6f7f" stroke-width="1.3"/><rect x="14.1" y="31.3" width="13.5" height="2.2" fill="#3f86b8"/><ellipse cx="20.9" cy="32.2" rx="2" ry="1.3" fill="#b89a3a"/></svg>
<svg style="position:absolute;left:368px;top:55px" width="40" height="40" viewBox="0 0 40 40"><rect x="7.4" y="6.2" width="27" height="27" rx="3" fill="url(#gSave)" stroke="#1d5a8f" stroke-width="1"/><rect x="16.6" y="7" width="12.8" height="7.8" fill="#f4f8fb"/><rect x="25.2" y="8" width="2.7" height="5.8" fill="#5f8fb0"/><rect x="11" y="7" width="4" height="7.8" fill="#7fb0d6"/><rect x="11" y="18.4" width="18.4" height="11" rx="2.5" fill="#cfe4f4" stroke="#9fc4e0" stroke-width="0.8"/></svg>
<svg style="position:absolute;left:424px;top:55px" width="40" height="40" viewBox="0 0 40 40"><path d="M15 6.1 H29.4 L35 11.7 V29.4 H15 Z" fill="#f4f8fa" stroke="#56656e" stroke-width="1"/><path d="M29.4 6.1 V11.7 H35" fill="#e4ecf0" stroke="#56656e" stroke-width="1"/><path d="M17.2 8.2 H21 M22.3 8.2 H23.4 M24.6 8.2 H25.7 M26.8 8.2 H28 M17.2 10.5 H18.4 M19.6 10.5 H23 M24.4 10.5 H28" stroke="#34505e" stroke-width="0.9"/><path d="M31 22 V27.5 M32.5 24 V27.5" stroke="#a8b8c0" stroke-width="0.8"/><path d="M7.4 21.4 V25.6 A11.6 7.6 0 0 0 30.6 25.6 V21.4 Z" fill="#5b8a2a"/><ellipse cx="19" cy="25.6" rx="11.6" ry="7.6" fill="#7fa84a"/><ellipse cx="19" cy="21.4" rx="11.6" ry="7.6" fill="#5f9e22"/><path d="M19 21.4 L7.6 19.6 A11.6 7.6 0 0 1 14.6 14.3 Z" fill="#1b6ca6"/><path d="M19 21.4 L7.4 21.4" stroke="#aee0f0" stroke-width="0.6"/><path d="M18.2 21 L16 13.9 A11.6 7.6 0 0 1 25.2 14.7 Z" fill="#f5b326"/></svg>
<svg style="position:absolute;left:488px;top:55px" width="40" height="40" viewBox="0 0 40 40"><rect x="7.2" y="7.2" width="25.6" height="25.6" fill="#e6f4f8" stroke="#3a6878" stroke-width="1.1"/><rect x="7.7" y="7.7" width="5.8" height="5.8" fill="#b4d8e4"/><rect x="13.9" y="7.7" width="18.4" height="5.8" fill="#cde8f0"/><rect x="7.7" y="13.9" width="5.8" height="18.4" fill="#cde8f0"/><path d="M13.7 7.2 V32.8 M19.9 7.2 V32.8 M26.1 7.2 V32.8 M7.2 13.7 H32.8 M7.2 19.9 H32.8 M7.2 26.1 H32.8" stroke="#3a6878" stroke-width="0.9"/><path d="M15.6 12.2 V9.2 H18 V12.2 M15.6 10.7 H18 M21.8 12.2 V9.2 H24.2 V12.2 Z M30.3 9.2 H28.3 V12.2 H30.3 M9.6 16.8 H11.8 M9.6 22 L11.6 23.8 M9.4 28.5 H11.6 V30" stroke="#2f4f5c" stroke-width="0.9" fill="none"/></svg>
<svg style="position:absolute;left:545px;top:55px" width="40" height="40" viewBox="0 0 40 40"><rect x="8.5" y="8.2" width="25" height="23.5" rx="1.5" fill="#f7fbfc" stroke="#3f89a3" stroke-width="1.6"/><rect x="9.3" y="9" width="23.4" height="4.4" fill="url(#gBand)"/><rect x="10.3" y="13.6" width="21.4" height="16" fill="#fff" stroke="#9fc7d5" stroke-width="0.6"/><rect x="13.2" y="16.6" width="2.6" height="2" fill="#4f9a4f"/><rect x="13.2" y="20.6" width="2.6" height="2" fill="#4f9a4f"/><rect x="13.2" y="24.6" width="2.6" height="2" fill="#4f9a4f"/><path d="M18 17.6 H28.8 M18 21.6 H28.8 M18 25.6 H28.8" stroke="#555" stroke-width="0.9"/></svg>
<svg style="position:absolute;left:600px;top:55px" width="40" height="40" viewBox="0 0 40 40"><rect x="7.4" y="8.2" width="25" height="23.5" rx="1.5" fill="#f4fafc" stroke="#3f89a3" stroke-width="1.6"/><rect x="8.2" y="9" width="23.4" height="4.4" fill="url(#gBand)"/><rect x="9.6" y="13.8" width="20.5" height="15.6" fill="#fff" stroke="#9fc7d5" stroke-width="0.6"/><path d="M14.1 15.5 V25.5 H16.5 M14.1 19.5 H16.5" stroke="#6a7a80" stroke-width="0.9" fill="none"/><rect x="16.6" y="17.5" width="3.4" height="3.6" fill="#4f9a2f"/><rect x="16.6" y="23.3" width="3.4" height="3.6" fill="#4f9a2f"/><rect x="23.3" y="16.3" width="11" height="11" rx="1.2" fill="#3a96c0" stroke="#2a7aa0" stroke-width="0.8"/><path d="M26.3 19.5 L28.3 21.8 L26.3 24 M29.3 19.5 L31.3 21.8 L29.3 24" stroke="#fff" stroke-width="1.2" fill="none"/></svg>
<svg style="position:absolute;left:661px;top:55px" width="40" height="40" viewBox="0 0 40 40"><rect x="7.4" y="8.2" width="25" height="23.5" rx="1.5" fill="#f4fafc" stroke="#3f89a3" stroke-width="1.6"/><rect x="8.2" y="9" width="23.4" height="4.4" fill="url(#gBand)"/><rect x="9.6" y="13.8" width="20.5" height="15.6" fill="#fff" stroke="#9fc7d5" stroke-width="0.6"/><path d="M20 13.8 V29.4" stroke="#5a9ab5" stroke-width="1.3"/><rect x="11.4" y="16.3" width="4" height="3.7" fill="#4f9a2f"/><rect x="11.4" y="22.8" width="4" height="3.7" fill="#4f9a2f"/><path d="M21.8 16.6 H28.8 M21.8 20.3 H28.8" stroke="#444" stroke-width="0.9"/><path d="M21.8 24 H28.8" stroke="#888" stroke-width="1.4"/></svg>
<svg style="position:absolute;left:716px;top:55px" width="40" height="40" viewBox="0 0 40 40"><circle cx="19.9" cy="19.9" r="12.8" fill="url(#gHelp)" stroke="#2b5f85" stroke-width="1"/><text x="20.3" y="27.2" font-family="Liberation Sans" font-weight="bold" font-size="19.5" text-anchor="middle" fill="#fff">?</text></svg>
<div style="position:absolute;left:1px;top:111px;width:934px;height:1px;background:#fafafa"></div>
<div style="position:absolute;left:1px;top:112px;width:934px;height:2px;background:linear-gradient(#939393,#7d7d7d)"></div>
<div style="position:absolute;left:0px;top:0px;width:937px;height:1px;background:#2d72b4"></div>
<div style="position:absolute;left:0px;top:0px;width:2px;height:652px;background:#2d6fae"></div>
<div style="position:absolute;left:935px;top:53px;width:1px;height:599px;background:#5a86b0"></div>
<div style="position:absolute;left:936px;top:0px;width:1px;height:652px;background:#2b76bc"></div>
<div style="position:absolute;left:0px;top:651px;width:937px;height:1px;background:#2d72b4"></div>
</body></html>
